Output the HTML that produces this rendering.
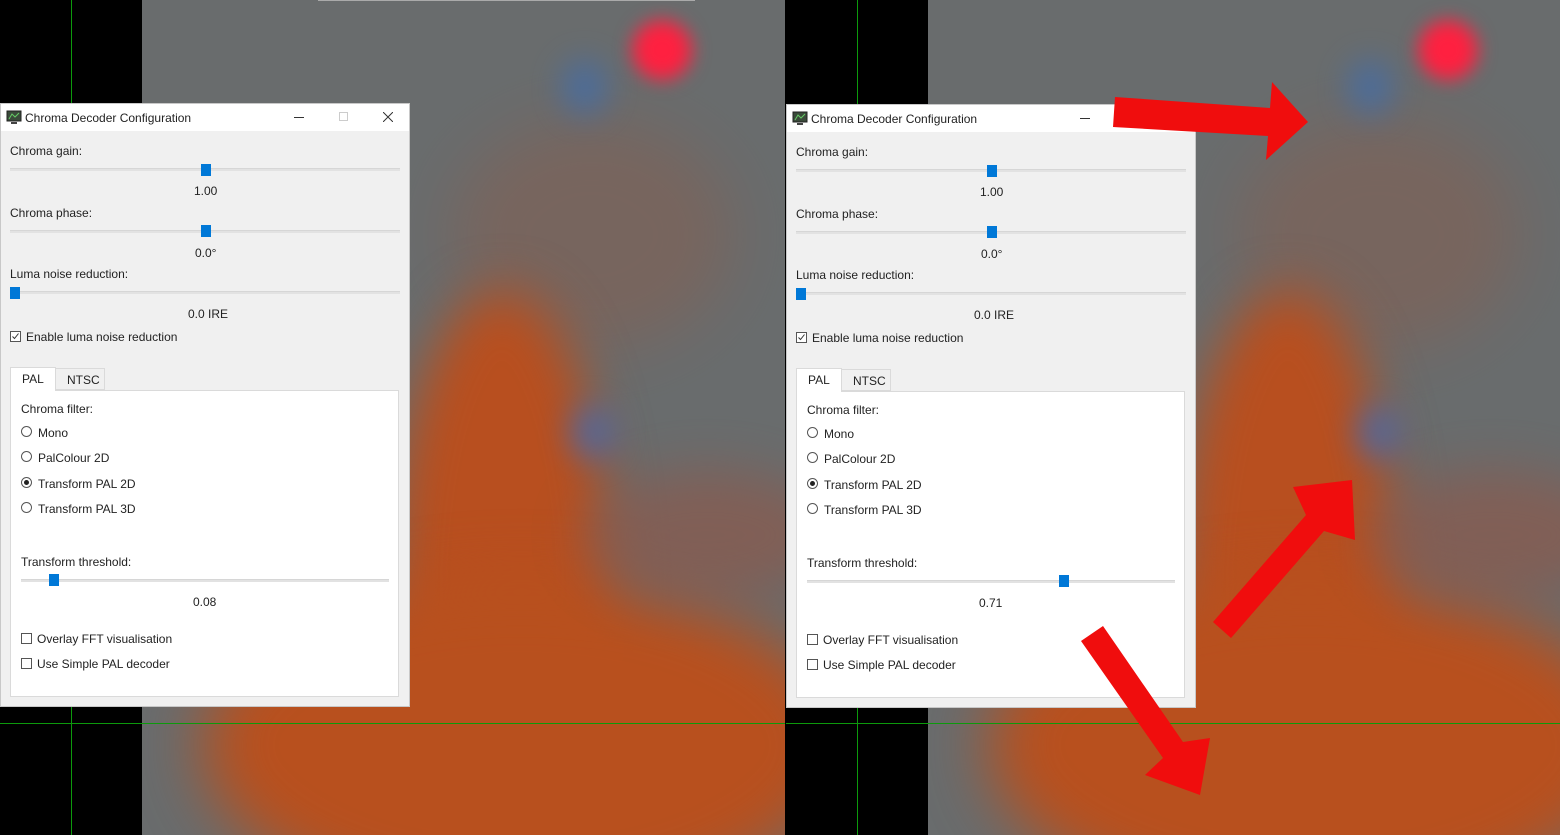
<!DOCTYPE html>
<html><head><meta charset="utf-8"><style>
*{margin:0;padding:0;box-sizing:border-box}
html,body{width:1560px;height:835px;overflow:hidden}
body{background:#000;position:relative;font-family:"Liberation Sans",sans-serif;font-size:12px;color:#222}
.p{position:absolute;top:0;width:785px;height:835px;overflow:hidden;background:#000}
.img{position:absolute;left:142px;top:0;width:643px;height:835px;background:#696c6d;overflow:hidden}
.b{position:absolute;border-radius:50%}
.vl{position:absolute;left:71px;top:0;width:1px;height:835px;background:#0c9a0c;z-index:5}
.hl{position:absolute;left:0;top:723px;width:785px;height:1px;background:#0c9a0c;z-index:5}
.dlg{position:absolute;left:0;top:103px;width:410px;height:604px;background:#f0f0f0;border:1px solid #c8c8c8;z-index:6}
.tb{position:absolute;left:0;top:0;width:408px;height:27px;background:#fff}
.t{position:absolute;white-space:nowrap}
.tr{position:absolute;height:3px;background:#e2e2e2;border-top:1px solid #d6d6d6}
.h{position:absolute;width:10px;height:12px;background:#0078d7}
.pane{position:absolute;left:9px;top:286px;width:389px;height:307px;background:#fff;border:1px solid #dadada}
.rad{position:absolute;width:11px;height:11px;border:1px solid #555;border-radius:50%;background:#fff}
.rad.on:after{content:"";position:absolute;left:2px;top:2px;width:5px;height:5px;border-radius:50%;background:#222}
.cb{position:absolute;width:11px;height:11px;border:1px solid #555;background:#fff;overflow:hidden}
</style></head><body>

<!-- LEFT PANEL -->
<div class="p" style="left:0">
 <div class="img">
  <div class="b" style="left:310px;top:120px;width:280px;height:230px;background:#8a5d4c;filter:blur(30px);opacity:.45"></div>
  <div class="b" style="left:250px;top:290px;width:220px;height:600px;background:#b84f1f;filter:blur(25px)"></div>
  <div class="b" style="left:60px;top:580px;width:640px;height:330px;background:#b8501e;filter:blur(30px)"></div>
  <div class="b" style="left:440px;top:470px;width:250px;height:130px;background:#8b5a4d;filter:blur(25px);opacity:.7"></div>
  <div class="b" style="left:490px;top:20px;width:60px;height:60px;background:#ff2040;filter:blur(9px)"></div>
  <div class="b" style="left:420px;top:60px;width:45px;height:55px;background:#3c6eb4;filter:blur(16px);opacity:.7"></div>
  <div class="b" style="left:428px;top:405px;width:45px;height:55px;background:#3a6cbc;filter:blur(16px);opacity:.7"></div>
  <div style="position:absolute;left:176px;top:0;width:377px;height:1px;background:#aaa"></div>
 </div>
 <div class="vl"></div><div class="hl"></div>
 <div class="dlg">
  <div class="tb">
   <svg style="position:absolute;left:5px;top:6px" width="16" height="15"><rect x="1" y="1" width="14" height="10" fill="#3a4a3a" stroke="#222"/><path d="M3 9 L6 4 L9 7 L13 3" stroke="#6c6" fill="none"/><rect x="5" y="12" width="6" height="2" fill="#444"/></svg>
   <div class="t" style="left:24px;top:7px">Chroma Decoder Configuration</div>
   <div style="position:absolute;left:293px;top:13px;width:10px;height:1px;background:#333"></div>
   <div style="position:absolute;left:338px;top:8px;width:9px;height:9px;border:1px solid #ccc"></div>
   <svg style="position:absolute;left:382px;top:8px" width="10" height="10"><path d="M0 0L10 10M10 0L0 10" stroke="#333" stroke-width="1"/></svg>
  </div>
  <div class="t" style="left:9px;top:40px">Chroma gain:</div>
  <div class="tr" style="left:9px;top:64px;width:390px"></div>
  <div class="h" style="left:200px;top:60px"></div>
  <div class="t" style="left:193px;top:80px">1.00</div>
  <div class="t" style="left:9px;top:102px">Chroma phase:</div>
  <div class="tr" style="left:9px;top:126px;width:390px"></div>
  <div class="h" style="left:200px;top:121px"></div>
  <div class="t" style="left:194px;top:142px">0.0°</div>
  <div class="t" style="left:9px;top:163px">Luma noise reduction:</div>
  <div class="tr" style="left:9px;top:187px;width:390px"></div>
  <div class="h" style="left:9px;top:183px"></div>
  <div class="t" style="left:187px;top:203px">0.0 IRE</div>
  <div class="cb" style="left:9px;top:227px"><svg width="9" height="9" style="position:absolute;left:0;top:0"><path d="M1.5 4.5L3.5 6.5L7.5 1.5" stroke="#333" fill="none"/></svg></div>
  <div class="t" style="left:25px;top:226px">Enable luma noise reduction</div>
  <div style="position:absolute;left:54px;top:264px;width:50px;height:22px;background:#f0f0f0;border:1px solid #dadada"></div>
  <div class="t" style="left:66px;top:269px">NTSC</div>
  <div style="position:absolute;left:9px;top:263px;width:46px;height:24px;background:#fff;border:1px solid #dadada;border-bottom:none;z-index:2"></div>
  <div class="t" style="left:21px;top:268px;z-index:3">PAL</div>
  <div class="pane">
   <div class="t" style="left:10px;top:11px">Chroma filter:</div>
   <div class="rad" style="left:10px;top:35px"></div><div class="t" style="left:27px;top:35px">Mono</div>
   <div class="rad" style="left:10px;top:60px"></div><div class="t" style="left:27px;top:60px">PalColour 2D</div>
   <div class="rad on" style="left:10px;top:86px"></div><div class="t" style="left:27px;top:86px">Transform PAL 2D</div>
   <div class="rad" style="left:10px;top:111px"></div><div class="t" style="left:27px;top:111px">Transform PAL 3D</div>
   <div class="t" style="left:10px;top:164px">Transform threshold:</div>
   <div class="tr" style="left:10px;top:188px;width:368px"></div>
   <div class="h" style="left:38px;top:183px"></div>
   <div class="t" style="left:182px;top:204px">0.08</div>
   <div class="cb" style="left:10px;top:242px"></div><div class="t" style="left:26px;top:241px">Overlay FFT visualisation</div>
   <div class="cb" style="left:10px;top:267px"></div><div class="t" style="left:26px;top:266px">Use Simple PAL decoder</div>
  </div>
 </div>
</div>

<!-- RIGHT PANEL -->
<div class="p" style="left:786px;width:774px">
 <div class="img">
  <div class="b" style="left:310px;top:120px;width:280px;height:230px;background:#8a5d4c;filter:blur(30px);opacity:.45"></div>
  <div class="b" style="left:250px;top:290px;width:220px;height:600px;background:#b84f1f;filter:blur(25px)"></div>
  <div class="b" style="left:60px;top:580px;width:640px;height:330px;background:#b8501e;filter:blur(30px)"></div>
  <div class="b" style="left:440px;top:470px;width:250px;height:130px;background:#8b5a4d;filter:blur(25px);opacity:.7"></div>
  <div class="b" style="left:490px;top:20px;width:60px;height:60px;background:#ff2040;filter:blur(9px)"></div>
  <div class="b" style="left:420px;top:60px;width:45px;height:55px;background:#3c6eb4;filter:blur(16px);opacity:.7"></div>
  <div class="b" style="left:428px;top:405px;width:45px;height:55px;background:#3a6cbc;filter:blur(16px);opacity:.7"></div>
 </div>
 <div class="vl"></div><div class="hl"></div>
 <div class="dlg" style="top:104px">
  <div class="tb">
   <svg style="position:absolute;left:5px;top:6px" width="16" height="15"><rect x="1" y="1" width="14" height="10" fill="#3a4a3a" stroke="#222"/><path d="M3 9 L6 4 L9 7 L13 3" stroke="#6c6" fill="none"/><rect x="5" y="12" width="6" height="2" fill="#444"/></svg>
   <div class="t" style="left:24px;top:7px">Chroma Decoder Configuration</div>
   <div style="position:absolute;left:293px;top:13px;width:10px;height:1px;background:#333"></div>
  </div>
  <div class="t" style="left:9px;top:40px">Chroma gain:</div>
  <div class="tr" style="left:9px;top:64px;width:390px"></div>
  <div class="h" style="left:200px;top:60px"></div>
  <div class="t" style="left:193px;top:80px">1.00</div>
  <div class="t" style="left:9px;top:102px">Chroma phase:</div>
  <div class="tr" style="left:9px;top:126px;width:390px"></div>
  <div class="h" style="left:200px;top:121px"></div>
  <div class="t" style="left:194px;top:142px">0.0°</div>
  <div class="t" style="left:9px;top:163px">Luma noise reduction:</div>
  <div class="tr" style="left:9px;top:187px;width:390px"></div>
  <div class="h" style="left:9px;top:183px"></div>
  <div class="t" style="left:187px;top:203px">0.0 IRE</div>
  <div class="cb" style="left:9px;top:227px"><svg width="9" height="9" style="position:absolute;left:0;top:0"><path d="M1.5 4.5L3.5 6.5L7.5 1.5" stroke="#333" fill="none"/></svg></div>
  <div class="t" style="left:25px;top:226px">Enable luma noise reduction</div>
  <div style="position:absolute;left:54px;top:264px;width:50px;height:22px;background:#f0f0f0;border:1px solid #dadada"></div>
  <div class="t" style="left:66px;top:269px">NTSC</div>
  <div style="position:absolute;left:9px;top:263px;width:46px;height:24px;background:#fff;border:1px solid #dadada;border-bottom:none;z-index:2"></div>
  <div class="t" style="left:21px;top:268px;z-index:3">PAL</div>
  <div class="pane">
   <div class="t" style="left:10px;top:11px">Chroma filter:</div>
   <div class="rad" style="left:10px;top:35px"></div><div class="t" style="left:27px;top:35px">Mono</div>
   <div class="rad" style="left:10px;top:60px"></div><div class="t" style="left:27px;top:60px">PalColour 2D</div>
   <div class="rad on" style="left:10px;top:86px"></div><div class="t" style="left:27px;top:86px">Transform PAL 2D</div>
   <div class="rad" style="left:10px;top:111px"></div><div class="t" style="left:27px;top:111px">Transform PAL 3D</div>
   <div class="t" style="left:10px;top:164px">Transform threshold:</div>
   <div class="tr" style="left:10px;top:188px;width:368px"></div>
   <div class="h" style="left:262px;top:183px"></div>
   <div class="t" style="left:182px;top:204px">0.71</div>
   <div class="cb" style="left:10px;top:242px"></div><div class="t" style="left:26px;top:241px">Overlay FFT visualisation</div>
   <div class="cb" style="left:10px;top:267px"></div><div class="t" style="left:26px;top:266px">Use Simple PAL decoder</div>
  </div>
 </div>
</div>

<svg style="position:absolute;left:0;top:0;z-index:10" width="1560" height="835">
 <polygon fill="#f00d0d" points="1115,97 1270,108 1272,82 1308,122 1266,160 1268,136 1113,127"/>
 <polygon fill="#f00d0d" points="1213,622 1306,515 1293,487 1352,480 1355,540 1324,531 1231,638"/>
 <polygon fill="#f00d0d" points="1081,641 1103,626 1183,742 1210,738 1200,795 1145,775 1163,758"/>
</svg>
</body></html>
